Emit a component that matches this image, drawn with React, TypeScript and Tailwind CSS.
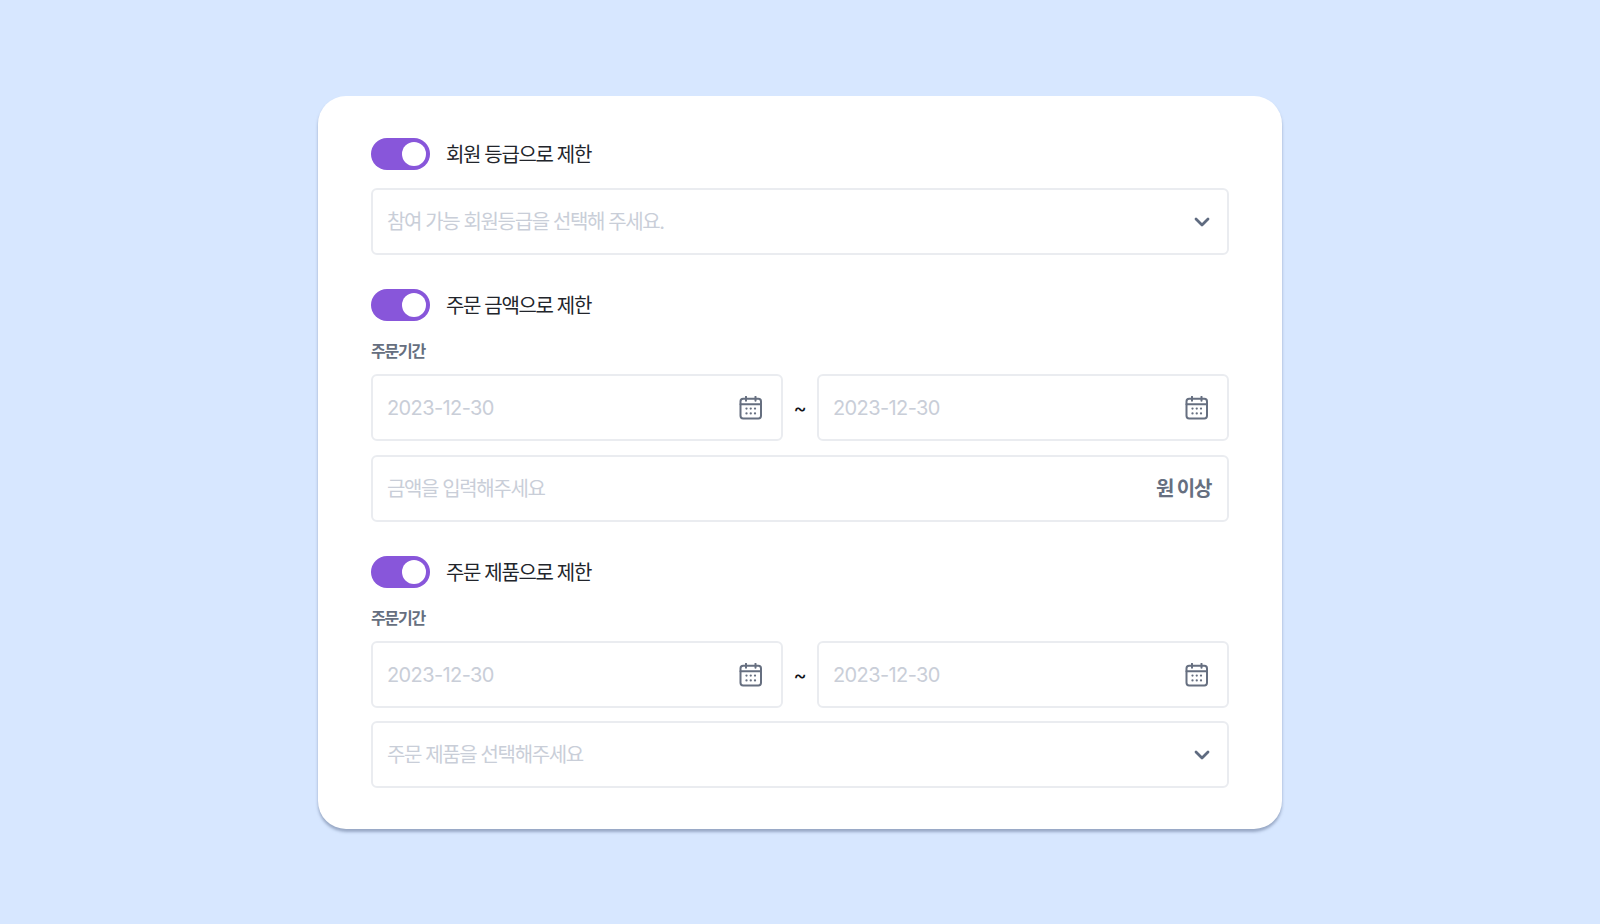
import React from "react";

const font = { fontFamily: "Inter, 'Noto Sans CJK KR', sans-serif" };

function Toggle({ label }: { label: string }) {
  return (
    <div className="flex items-center gap-4 h-8">
      <div className="w-[59px] h-8 rounded-full bg-[#8856da] flex items-center justify-end pr-[4px] shrink-0">
        <div className="w-6 h-6 rounded-full bg-white" />
      </div>
      <span className="text-[20px] leading-8 pt-[1px] text-[#22252b] tracking-[-1.35px]">{label}</span>
    </div>
  );
}

function Chevron() {
  return (
    <svg className="mr-[-1px]" width="24" height="24" viewBox="0 0 24 24" fill="none" stroke="#5f6b80" strokeWidth="2.8" strokeLinecap="round" strokeLinejoin="round">
      <path d="M6 9l6 6 6-6" />
    </svg>
  );
}

function CalendarIcon() {
  return (
    <svg className="mr-[4px]" width="24" height="24" viewBox="0 0 24 24" fill="none" stroke="#666f80" strokeWidth="2" strokeLinecap="round" strokeLinejoin="round">
      <rect x="1.5" y="2.8" width="20.5" height="19.6" rx="2.6" />
      <path d="M1.5 8.2h20.5M7 0.8v4M16.5 0.8v4" />
      <g fill="#666f80" stroke="none">
        <circle cx="7.5" cy="12.6" r="1.15" />
        <circle cx="11.75" cy="12.6" r="1.15" />
        <circle cx="16" cy="12.6" r="1.15" />
        <circle cx="7.5" cy="17.4" r="1.15" />
        <circle cx="11.75" cy="17.4" r="1.15" />
        <circle cx="16" cy="17.4" r="1.15" />
      </g>
    </svg>
  );
}

function Field({ text, right, className, date }: { text: string; right: React.ReactNode; className: string; date?: boolean }) {
  return (
    <div className={"flex items-center justify-between border-2 border-[#eaecf0] rounded-[6px] bg-white pl-[14px] pr-[14px] " + className}>
      <span className={date ? "pt-[1px] text-[20px] text-[#c9ced8] tracking-[-0.6px]" : "pt-[1px] text-[20px] text-[#c9ced8] tracking-[-1.38px]"}>{text}</span>
      {right}
    </div>
  );
}

function DateRow() {
  return (
    <div className="flex items-center">
      <Field date className="w-[412px] h-[67px]" text="2023-12-30" right={<CalendarIcon />} />
      <span className="w-[34px] text-center text-[20px] text-[#111318]">~</span>
      <Field date className="w-[412px] h-[67px]" text="2023-12-30" right={<CalendarIcon />} />
    </div>
  );
}

function Label() {
  return <div className="text-[16px] leading-6 font-semibold text-[#666f80] tracking-[-1.2px] mt-[18px] mb-[11px]">주문기간</div>;
}

export default function App() {
  return (
    <div className="min-h-[924px] bg-[#d7e7ff] flex justify-center pt-[96px]" style={font}>
      <div className="w-[964px] h-[733px] bg-white rounded-[28px] px-[53px] pt-[42px] shadow-[0_3px_3px_rgba(100,116,150,0.55)]">
        <Toggle label="회원 등급으로 제한" />
        <Field className="w-full h-[67px] mt-[18px]" text="참여 가능 회원등급을 선택해 주세요." right={<Chevron />} />
        <div className="mt-[34px]"><Toggle label="주문 금액으로 제한" /></div>
        <Label />
        <DateRow />
        <Field
          className="w-full h-[67px] mt-[14px]"
          text="금액을 입력해주세요"
          right={<span className="text-[20px] font-semibold text-[#666f80] tracking-[-1.3px] mr-[2px]">원 이상</span>}
        />
        <div className="mt-[34px]"><Toggle label="주문 제품으로 제한" /></div>
        <Label />
        <DateRow />
        <Field className="w-full h-[67px] mt-[13px]" text="주문 제품을 선택해주세요" right={<Chevron />} />
      </div>
    </div>
  );
}
